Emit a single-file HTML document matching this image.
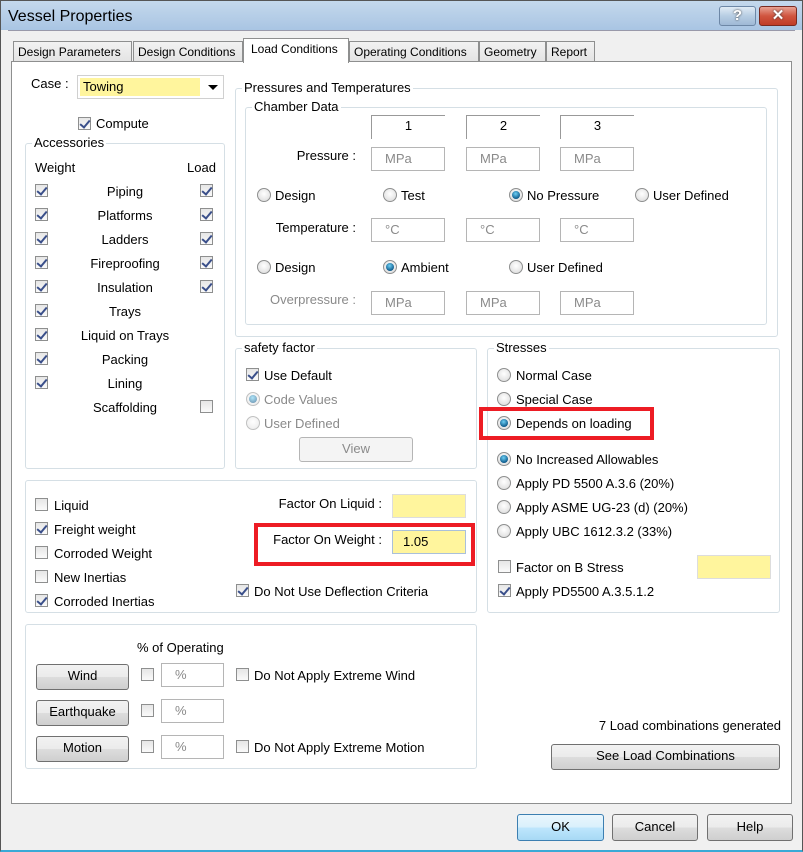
<!DOCTYPE html>
<html><head><meta charset="utf-8"><style>
*{box-sizing:border-box;margin:0;padding:0}
body{width:803px;height:852px;overflow:hidden;background:#f0f0f0;font-family:"Liberation Sans",sans-serif;font-size:13px;color:#000;position:relative}
.a{position:absolute}
.t{position:absolute;line-height:16px;white-space:nowrap}
.tb{font-size:12px}
.r{text-align:right}
.c{text-align:center}
.g{color:#8a8a8a}
.cb{position:absolute;width:13px;height:13px;border:1px solid #8e8f8f;background:linear-gradient(#e6e6e6,#fafafa)}
.cb.k::after{content:"";position:absolute;left:3px;top:0px;width:4px;height:8px;border:solid #3a4f8a;border-width:0 2px 2px 0;transform:rotate(40deg)}
.rb{position:absolute;width:14px;height:14px;border-radius:50%;border:1px solid #8e8f8f;background:radial-gradient(circle at 50% 40%,#fff,#d8d8d8)}
.rb.k::after{content:"";position:absolute;left:2px;top:2px;width:8px;height:8px;border-radius:50%;background:radial-gradient(circle at 45% 35%,#6ed0f5,#0f5d8e 70%,#063a5c)}
.rb.d{opacity:.55}
.in{position:absolute;border:1px solid #b5b5b5;background:#fff;color:#8a8a8a;line-height:21px;padding-left:13px}
.y{background:#fff59d}
.gb{position:absolute;border:1px solid #d5dfe5;border-radius:3px}
.gt{position:absolute;background:#fff;padding:0 2px;line-height:14px;top:-8px;left:6px}
.btn{position:absolute;border:1px solid #707070;border-radius:3px;background:linear-gradient(#f2f2f2 0%,#ebebeb 50%,#dddddd 51%,#cfcfcf 100%);text-align:center;line-height:22px}
.red{position:absolute;border:4px solid #ed1c24}
.hd{position:absolute;width:74px;height:24px;border:1px solid #999;border-bottom:none;border-right:none;text-align:center;line-height:20px}
</style></head><body>
<div class="a" style="left:0;top:0;width:803px;height:852px;border:1px solid #555;border-bottom:2px solid #3aa9d6"></div>
<div class="a" style="left:1px;top:1px;width:801px;height:29px;background:linear-gradient(#c4d8ec,#a9c5e3)"></div>
<div class="t" style="left:8px;top:7px;font-size:16px;line-height:19px">Vessel Properties</div>
<div class="a" style="left:719px;top:6px;width:37px;height:20px;border:1px solid #6d87a6;border-radius:3px;background:linear-gradient(#e1ebf5,#b7cde3 50%,#9fb9d6);text-align:center;color:#fff;font-weight:bold;font-size:15px;line-height:18px;text-shadow:0 0 2px #333">?</div>
<div class="a" style="left:759px;top:6px;width:38px;height:20px;border:1px solid #7a2a20;border-radius:3px;background:linear-gradient(#e8a394,#d0553f 50%,#c03c27);text-align:center;color:#fff;font-weight:bold;font-size:15px;line-height:18px;text-shadow:0 0 2px #333">✕</div>
<div class="a" style="left:8px;top:30px;width:787px;height:1px;background:#99a"></div>
<div class="a" style="left:13px;top:41px;width:119px;height:21px;border:1px solid #8e8f8f;border-bottom:none;background:linear-gradient(#f2f2f2,#e3e3e3)"></div><div class="t tb" style="left:18px;top:44px">Design Parameters</div>
<div class="a" style="left:133px;top:41px;width:110px;height:21px;border:1px solid #8e8f8f;border-bottom:none;background:linear-gradient(#f2f2f2,#e3e3e3)"></div><div class="t tb" style="left:138px;top:44px">Design Conditions</div>
<div class="a" style="left:349px;top:41px;width:130px;height:21px;border:1px solid #8e8f8f;border-bottom:none;background:linear-gradient(#f2f2f2,#e3e3e3)"></div><div class="t tb" style="left:354px;top:44px">Operating Conditions</div>
<div class="a" style="left:479px;top:41px;width:67px;height:21px;border:1px solid #8e8f8f;border-bottom:none;background:linear-gradient(#f2f2f2,#e3e3e3)"></div><div class="t tb" style="left:484px;top:44px">Geometry</div>
<div class="a" style="left:546px;top:41px;width:49px;height:21px;border:1px solid #8e8f8f;border-bottom:none;background:linear-gradient(#f2f2f2,#e3e3e3)"></div><div class="t tb" style="left:551px;top:44px">Report</div>
<div class="a" style="left:11px;top:61px;width:781px;height:743px;border:1px solid #8e8f8f;background:#fff"></div>
<div class="a" style="left:243px;top:38px;width:106px;height:25px;border:1px solid #8e8f8f;border-bottom:none;background:#fff"></div><div class="t tb" style="left:251px;top:41px">Load Conditions</div>

<div class="t" style="left:31px;top:76px">Case :</div>
<div class="a" style="left:77px;top:75px;width:147px;height:24px;border:1px solid #d0d0d0;background:#fff"></div>
<div class="a y" style="left:80px;top:78px;width:120px;height:18px"></div>
<div class="t" style="left:83px;top:79px">Towing</div>
<div class="a" style="left:208px;top:85px;width:0;height:0;border-left:5px solid transparent;border-right:5px solid transparent;border-top:5px solid #000"></div>
<div class="cb k" style="left:78px;top:117px"></div><div class="t" style="left:96px;top:116px">Compute</div>

<div class="gb" style="left:25px;top:143px;width:200px;height:326px"><div class="gt">Accessories</div></div>
<div class="t" style="left:35px;top:160px">Weight</div><div class="t" style="left:187px;top:160px">Load</div>
<div class="cb k" style="left:35px;top:184px"></div><div class="t c" style="left:55px;top:184px;width:140px">Piping</div><div class="cb k" style="left:200px;top:184px"></div>
<div class="cb k" style="left:35px;top:208px"></div><div class="t c" style="left:55px;top:208px;width:140px">Platforms</div><div class="cb k" style="left:200px;top:208px"></div>
<div class="cb k" style="left:35px;top:232px"></div><div class="t c" style="left:55px;top:232px;width:140px">Ladders</div><div class="cb k" style="left:200px;top:232px"></div>
<div class="cb k" style="left:35px;top:256px"></div><div class="t c" style="left:55px;top:256px;width:140px">Fireproofing</div><div class="cb k" style="left:200px;top:256px"></div>
<div class="cb k" style="left:35px;top:280px"></div><div class="t c" style="left:55px;top:280px;width:140px">Insulation</div><div class="cb k" style="left:200px;top:280px"></div>
<div class="cb k" style="left:35px;top:304px"></div><div class="t c" style="left:55px;top:304px;width:140px">Trays</div>
<div class="cb k" style="left:35px;top:328px"></div><div class="t c" style="left:55px;top:328px;width:140px">Liquid on Trays</div>
<div class="cb k" style="left:35px;top:352px"></div><div class="t c" style="left:55px;top:352px;width:140px">Packing</div>
<div class="cb k" style="left:35px;top:376px"></div><div class="t c" style="left:55px;top:376px;width:140px">Lining</div>
<div class="t c" style="left:55px;top:400px;width:140px">Scaffolding</div><div class="cb" style="left:200px;top:400px"></div>

<div class="gb" style="left:235px;top:88px;width:543px;height:249px"><div class="gt">Pressures and Temperatures</div></div>
<div class="gb" style="left:245px;top:107px;width:522px;height:218px"><div class="gt">Chamber Data</div></div>
<div class="hd" style="left:371px;top:115px">1</div>
<div class="hd" style="left:466px;top:115px">2</div>
<div class="hd" style="left:560px;top:115px">3</div>
<div class="t r" style="left:250px;top:148px;width:106px">Pressure :</div>
<div class="in" style="left:371px;top:147px;width:74px;height:24px">MPa</div>
<div class="in" style="left:466px;top:147px;width:74px;height:24px">MPa</div>
<div class="in" style="left:560px;top:147px;width:74px;height:24px">MPa</div>
<div class="rb" style="left:257px;top:188px"></div><div class="t" style="left:275px;top:188px">Design</div>
<div class="rb" style="left:383px;top:188px"></div><div class="t" style="left:401px;top:188px">Test</div>
<div class="rb k" style="left:509px;top:188px"></div><div class="t" style="left:527px;top:188px">No Pressure</div>
<div class="rb" style="left:635px;top:188px"></div><div class="t" style="left:653px;top:188px">User Defined</div>
<div class="t r" style="left:250px;top:220px;width:106px">Temperature :</div>
<div class="in" style="left:371px;top:218px;width:74px;height:24px">°C</div>
<div class="in" style="left:466px;top:218px;width:74px;height:24px">°C</div>
<div class="in" style="left:560px;top:218px;width:74px;height:24px">°C</div>
<div class="rb" style="left:257px;top:260px"></div><div class="t" style="left:275px;top:260px">Design</div>
<div class="rb k" style="left:383px;top:260px"></div><div class="t" style="left:401px;top:260px">Ambient</div>
<div class="rb" style="left:509px;top:260px"></div><div class="t" style="left:527px;top:260px">User Defined</div>
<div class="t g r" style="left:250px;top:292px;width:106px">Overpressure :</div>
<div class="in" style="left:371px;top:291px;width:74px;height:24px">MPa</div>
<div class="in" style="left:466px;top:291px;width:74px;height:24px">MPa</div>
<div class="in" style="left:560px;top:291px;width:74px;height:24px">MPa</div>

<div class="gb" style="left:235px;top:348px;width:242px;height:121px"><div class="gt">safety factor</div></div>
<div class="cb k" style="left:246px;top:368px"></div><div class="t" style="left:264px;top:368px">Use Default</div>
<div class="rb k d" style="left:246px;top:392px"></div><div class="t g" style="left:264px;top:392px">Code Values</div>
<div class="rb d" style="left:246px;top:416px"></div><div class="t g" style="left:264px;top:416px">User Defined</div>
<div class="btn" style="left:299px;top:437px;width:114px;height:25px;color:#8a8a8a;border-color:#b5b5b5;background:#f4f4f4">View</div>

<div class="gb" style="left:487px;top:348px;width:293px;height:265px"><div class="gt">Stresses</div></div>
<div class="rb" style="left:497px;top:368px"></div><div class="t" style="left:516px;top:368px">Normal Case</div>
<div class="rb" style="left:497px;top:392px"></div><div class="t" style="left:516px;top:392px">Special Case</div>
<div class="rb k" style="left:497px;top:416px"></div><div class="t" style="left:516px;top:416px">Depends on loading</div>
<div class="red" style="left:479px;top:407px;width:175px;height:33px"></div>
<div class="rb k" style="left:497px;top:452px"></div><div class="t" style="left:516px;top:452px">No Increased Allowables</div>
<div class="rb" style="left:497px;top:476px"></div><div class="t" style="left:516px;top:476px">Apply PD 5500 A.3.6 (20%)</div>
<div class="rb" style="left:497px;top:500px"></div><div class="t" style="left:516px;top:500px">Apply ASME UG-23 (d) (20%)</div>
<div class="rb" style="left:497px;top:524px"></div><div class="t" style="left:516px;top:524px">Apply UBC 1612.3.2 (33%)</div>
<div class="cb" style="left:498px;top:560px"></div><div class="t" style="left:516px;top:560px">Factor on B Stress</div>
<div class="a y" style="left:697px;top:555px;width:74px;height:24px;border:1px solid #ddd"></div>
<div class="cb k" style="left:498px;top:584px"></div><div class="t" style="left:516px;top:584px">Apply PD5500 A.3.5.1.2</div>

<div class="gb" style="left:25px;top:480px;width:452px;height:133px"></div>
<div class="cb" style="left:35px;top:498px"></div><div class="t" style="left:54px;top:498px">Liquid</div>
<div class="cb k" style="left:35px;top:522px"></div><div class="t" style="left:54px;top:522px">Freight weight</div>
<div class="cb" style="left:35px;top:546px"></div><div class="t" style="left:54px;top:546px">Corroded Weight</div>
<div class="cb" style="left:35px;top:570px"></div><div class="t" style="left:54px;top:570px">New Inertias</div>
<div class="cb k" style="left:35px;top:594px"></div><div class="t" style="left:54px;top:594px">Corroded Inertias</div>
<div class="t r" style="left:240px;top:496px;width:142px">Factor On Liquid :</div>
<div class="a y" style="left:392px;top:494px;width:74px;height:24px;border:1px solid #ddd"></div>
<div class="t r" style="left:240px;top:532px;width:142px">Factor On Weight :</div>
<div class="a y" style="left:392px;top:530px;width:74px;height:24px;border:1px solid #aac0da;line-height:22px;padding-left:10px">1.05</div>
<div class="red" style="left:254px;top:523px;width:221px;height:43px"></div>
<div class="cb k" style="left:236px;top:584px"></div><div class="t" style="left:254px;top:584px">Do Not Use Deflection Criteria</div>

<div class="gb" style="left:25px;top:624px;width:452px;height:145px"></div>
<div class="t" style="left:137px;top:640px">% of Operating</div>
<div class="btn" style="left:36px;top:664px;width:93px;height:26px">Wind</div>
<div class="cb" style="left:141px;top:668px"></div><div class="in" style="left:161px;top:663px;width:63px;height:24px">%</div>
<div class="cb" style="left:236px;top:668px"></div><div class="t" style="left:254px;top:668px">Do Not Apply Extreme Wind</div>
<div class="btn" style="left:36px;top:700px;width:93px;height:26px">Earthquake</div>
<div class="cb" style="left:141px;top:704px"></div><div class="in" style="left:161px;top:699px;width:63px;height:24px">%</div>
<div class="btn" style="left:36px;top:736px;width:93px;height:26px">Motion</div>
<div class="cb" style="left:141px;top:740px"></div><div class="in" style="left:161px;top:735px;width:63px;height:24px">%</div>
<div class="cb" style="left:236px;top:740px"></div><div class="t" style="left:254px;top:740px">Do Not Apply Extreme Motion</div>

<div class="t r" style="left:540px;top:718px;width:241px">7 Load combinations generated</div>
<div class="btn" style="left:551px;top:744px;width:229px;height:26px">See Load Combinations</div>

<div class="btn" style="left:517px;top:814px;width:87px;height:27px;border-color:#3c7fb1;background:linear-gradient(#eaf6fd,#d9f0fc 50%,#bee6fd 51%,#a7d9f5);line-height:24px">OK</div>
<div class="btn" style="left:612px;top:814px;width:86px;height:27px;line-height:24px">Cancel</div>
<div class="btn" style="left:707px;top:814px;width:86px;height:27px;line-height:24px">Help</div>
</body></html>
